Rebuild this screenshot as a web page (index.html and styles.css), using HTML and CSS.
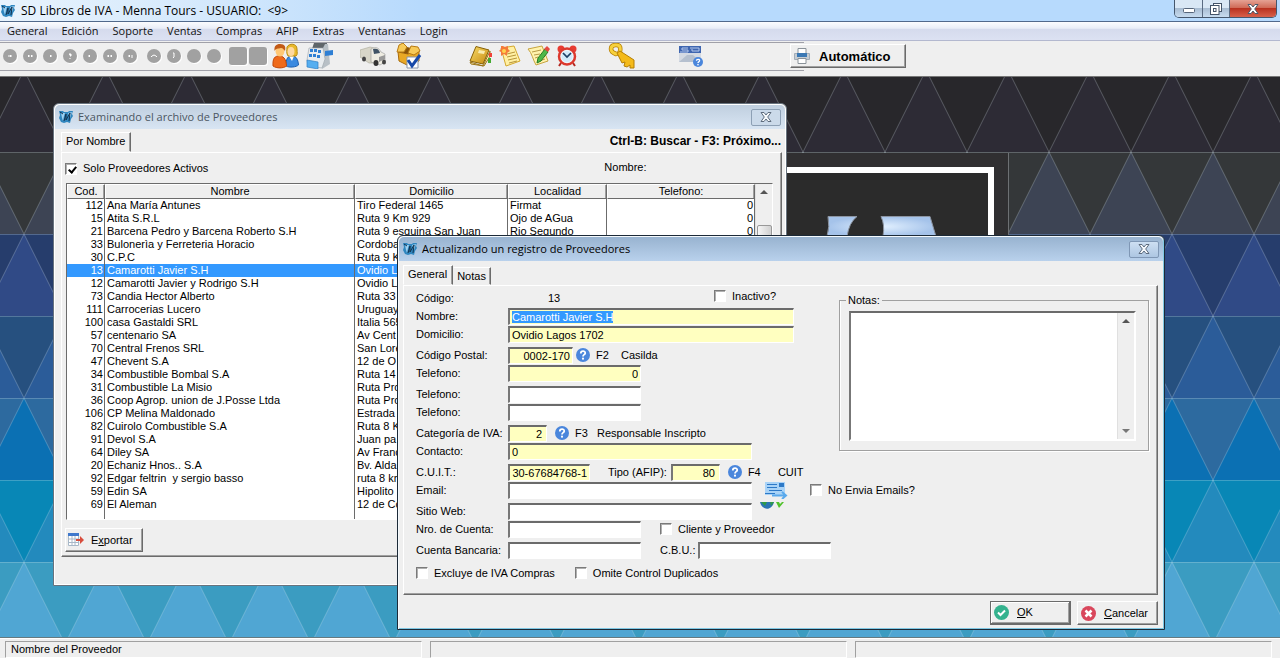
FILE: index.html
```html
<!DOCTYPE html>
<html lang="es">
<head>
<meta charset="utf-8">
<title>SD Libros de IVA - Menna Tours</title>
<link rel="stylesheet" href="styles.css">
</head>
<body>
<svg class="defs" width="0" height="0" aria-hidden="true">
  <defs>
    <linearGradient id="gold" x1="0" y1="0" x2="1" y2="1"><stop offset="0" stop-color="#f9dc6a"/><stop offset="1" stop-color="#c68a10"/></linearGradient>
    <symbol id="app" viewBox="0 0 14 14"><path fill="#2f86bf" d="M0 1h4l1 1h4l1-1h4l-1 3 1 2-2 3-1 4-3-1-3 1-3-1-2-4 1-3z"/><path fill="#9fd0f0" d="M2 3h4L5 6 4 11 3 8zM9 3l4-1-2 6z"/><path fill="none" stroke="#12324f" d="M5 11 7 4v6l4-7-1 8M1 2l3 2"/></symbol>
    <symbol id="help" viewBox="0 0 14 14"><circle cx="7" cy="7" r="7" fill="#4a86dc"/><path fill="none" stroke="#fff" stroke-width="1.8" d="M4.8 5.4c0-3 4.6-2.8 4.4-.3C9.100 6.700 7 6.600 7 8.400"/><circle cx="7" cy="10.700" r="1.100" fill="#fff"/></symbol>
    <symbol id="close" viewBox="0 0 12 10"><path d="M1 .5h3L6 3l2-2.500h3L7.700 5 11 9.500H8L6 7 4 9.500H1L4.300 5z" fill="#fff" stroke="#4c5a6c"/></symbol>
  </defs>
</svg>

<header class="titlebar">
  <svg class="app-icon"><use href="#app"/></svg>
  <h1 class="title">SD Libros de IVA - Menna Tours - USUARIO:&nbsp; &lt;9&gt;</h1>
  <div class="window-controls">
    <button class="ctl ctl-min" type="button" aria-label="Minimizar"><svg width="12" height="5"><rect x=".5" y=".5" width="11" height="4" rx="1" fill="#fff" stroke="#56657a"/></svg></button>
    <button class="ctl ctl-max" type="button" aria-label="Restaurar"><svg width="12" height="12" fill="#fff" stroke="#445368"><rect x="3.500" y=".5" width="8" height="8"/><rect x=".5" y="2.500" width="8.500" height="9"/><rect x="3.500" y="5.500" width="2.500" height="3"/></svg></button>
    <button class="ctl ctl-close" type="button" aria-label="Cerrar"><svg width="12" height="10"><use href="#close"/></svg></button>
  </div>
</header>

<nav class="menubar">
  <a href="#">General</a><a href="#">Edición</a><a href="#">Soporte</a><a href="#">Ventas</a><a href="#">Compras</a><a href="#">AFIP</a><a href="#">Extras</a><a href="#">Ventanas</a><a href="#">Login</a>
</nav>

<div class="toolbar">
  <div class="group nav-group">
    <button class="dot" type="button" aria-label="Primero"><svg viewBox="0 0 8 8"><path d="M5 3v2L4 4zM2 4h3"/></svg></button>
    <button class="dot" type="button" aria-label="Página anterior"><svg viewBox="0 0 8 8"><path d="M3 3v2L2 4zM6 3v2L5 4z"/></svg></button>
    <button class="dot" type="button" aria-label="Anterior"><svg viewBox="0 0 8 8"><path d="M5 3v2L4 4z"/></svg></button>
    <button class="dot" type="button" aria-label="Buscar"><svg viewBox="0 0 8 8"><path d="M3 2h2v2H4M4 6v1"/></svg></button>
    <button class="dot" type="button" aria-label="Siguiente"><svg viewBox="0 0 8 8"><path d="M3 3v2l1-1z"/></svg></button>
    <button class="dot" type="button" aria-label="Página siguiente"><svg viewBox="0 0 8 8"><path d="M2 3v2l1-1zM5 3v2l1-1z"/></svg></button>
    <button class="dot" type="button" aria-label="Último"><svg viewBox="0 0 8 8"><path d="M3 3v2l1-1zM6 3v3"/></svg></button>
  </div>
  <div class="group edit-group">
    <button class="dot" type="button" aria-label="Arriba"><svg viewBox="0 0 8 8"><path fill="none" d="M1 5l1-1 2-1 2 1 1 1"/></svg></button>
    <button class="dot" type="button" aria-label="Insertar"><svg viewBox="0 0 8 8"><path fill="none" d="M3 1h1v4M3 5l1 1"/></svg></button>
    <button class="dot" type="button" aria-label="Modificar"></button>
    <button class="dot" type="button" aria-label="Eliminar"></button>
  </div>
  <div class="group square-group">
    <button class="square" type="button" aria-label="Copiar"></button>
    <button class="square" type="button" aria-label="Pegar"></button>
  </div>
  <div class="group people-group">
    <button class="tool" type="button" aria-label="Clientes"><svg width="28" height="26" viewBox="0 0 28 26"><path fill="#3b8ae0" stroke="#1e5fae" d="M14 23c0-8 2-10 6-10s6 3 6.500 9c-2 2-9 3-12.500 1z"/><path fill="#fff" d="m17 13 3 5 2-5z"/><path fill="#e8b92c" stroke="#b98a12" d="M15 4c2-4 10-4 10 2 0 4 1 5-1 7h-8c-2-3-1-6-1-9z"/><ellipse cx="19" cy="8.500" rx="3.500" ry="4.500" fill="#ffd9a0"/><path fill="#ef6a1a" stroke="#c14708" d="M1 23c-.5-8 2-10 6-10s7 2 7.500 10c-3 2.500-10 2.500-13.500 0z"/><ellipse cx="8" cy="8" rx="4.500" ry="5.500" fill="#ffc875"/><path fill="#c25a16" d="M2.500 8C2 3 4 1 8 1c5 0 6 3 5 7-1-1-2-3-4-3-3 1-5 0-6.500 3z"/></svg></button>
    <button class="tool" type="button" aria-label="Caja"><svg width="28" height="26" viewBox="0 0 28 26"><path fill="#5f666a" d="M8 0h13v6H6z"/><path fill="#b8c0c6" d="M19 1h3l2 20-8 5-1-17z"/><path fill="#e8ecef" stroke="#9aa3aa" stroke-width=".6" d="M3 5h14l2 11-3 9-14-2-1-6z"/><path fill="#2e7fd4" d="M4 6h3v3H4zM8 6h3v3H8zM12 7h3v3h-3zM3 11h3v3H3zM7 11h3v3H7zM11 12h3v3h-3zM19 8l8-1v5l-8 1z"/><path fill="#55aef0" stroke="#2f7fc4" stroke-width=".7" d="m1 17 11 2v7L1 24z"/></svg></button>
  </div>
  <div class="group stock-group">
    <button class="tool" type="button" aria-label="Transporte"><svg width="26" height="22" viewBox="0 0 26 22"><path fill="#d8d6c8" stroke="#aaa898" stroke-width=".6" d="m0 5 10-3 4 1v15H9L0 12z"/><path fill="#eeece2" stroke="#999" stroke-width=".6" d="M11 4c5-3 8-1 10 3l4 2v8l-5 3-9-3z"/><path fill="#405365" d="M13 4c4-1 6 0 7 4l-6 1z"/><path fill="#999" d="m19 12 6-2v4l-6 3z"/><ellipse cx="16" cy="18" rx="2.500" ry="3" fill="#333"/><ellipse cx="24" cy="17" rx="2" ry="2.500" fill="#444"/><ellipse cx="4" cy="14" rx="2" ry="2.500" fill="#444"/></svg></button>
    <button class="tool" type="button" aria-label="Artículos"><svg width="26" height="26" viewBox="0 0 26 26"><path fill="#e9a824" stroke="#a96c0c" d="m2 9 10 2 11-4v11l-10 5-10-5z"/><path fill="#8a5407" d="m3 9 8-5 12 3-11 4z"/><path fill="#f7ca58" stroke="#b87a12" d="m1 9 2-7 4-2 4 4-3 5zM12 10l3-7 7 1 2 4-6 4z"/><path fill="#fff" stroke="#8895aa" d="M11 14h11v11H11z"/><path fill="none" stroke="#1749a8" stroke-width="3" d="m12 17 4 6 8-11"/></svg></button>
  </div>
  <div class="group notes-group">
    <button class="tool" type="button" aria-label="Agenda"><svg width="24" height="22" viewBox="0 0 24 22"><path fill="#fff3b8" stroke="#9a7418" d="m1 17 13 4 7-15v5l-6 10L2 19z"/><path fill="url(#gold)" stroke="#886207" d="M7 1.500 20 5l-6 14L1 16z"/><path fill="#f9ecb0" d="m10 5 6 1-1 3-6-1z"/><path fill="#f04438" d="M20 8h3v4h-3z"/><path fill="#45aa30" d="M19 13h3v5h-3z"/></svg></button>
    <button class="tool" type="button" aria-label="Nueva nota"><svg width="24" height="22" viewBox="0 0 24 22"><path fill="#fff0a4" stroke="#d4a82e" d="m3 3 13-2 6 15-14 5C6 15 5 9 3 3z"/><path stroke="#b79538" d="m9 9 8-2M9 12l9-2M10 15l9-2M11 18l8-2"/><path fill="#f47b3a" d="m5 1 2 1 3-1v3l2 2-3 2v3L6 9l-3 2V7L1 6l2-2V1z"/><circle cx="6" cy="6" r="2" fill="#ffd24c"/></svg></button>
    <button class="tool" type="button" aria-label="Editar nota"><svg width="24" height="22" viewBox="0 0 24 22"><path fill="#fff3ae" stroke="#c7a440" d="m1 4 14-3 6 15-12 4C6 15 5 8 1 4z"/><path stroke="#b79a46" d="m5 7 9-2M7 10l6-1M8 13l3-1M10 17l8-3"/><path fill="#4db848" stroke="#287c24" d="m11 13 7-9 3 3-7 9-4 2z"/><path fill="#e54b42" d="m17 4 3-3 3 3-2 3z"/></svg></button>
    <button class="tool" type="button" aria-label="Alarma"><svg width="22" height="22" viewBox="0 0 22 22"><circle cx="5" cy="4" r="3.500" fill="#e83c32"/><circle cx="17" cy="4" r="3.500" fill="#e83c32"/><path stroke="#b22a22" stroke-width="2" d="m5 18-2 3M17 18l2 3"/><circle cx="11" cy="11.500" r="8" fill="#eef7fc" stroke="#dc392e" stroke-width="2.500"/><circle cx="11" cy="11.500" r="5.500" fill="#d2eafa"/><path fill="none" stroke="#1c3f66" stroke-width="1.700" d="m7 8 4 4 4-4"/></svg></button>
  </div>
  <div class="group key-group">
    <button class="tool" type="button" aria-label="Clave"><svg width="28" height="26" viewBox="0 0 28 26"><path fill="none" stroke="#b57f05" stroke-width="4.500" d="M3 6c0-5 8-5 9-2 1 5-1 7-4 7-3-1-5-2-5-5z"/><path fill="none" stroke="#f7d13d" stroke-width="3" d="M3 6c0-5 8-5 9-2 1 5-1 7-4 7-3-1-5-2-5-5z"/><path fill="#f4ba1a" stroke="#b57f05" d="m9 10 3-2 14 9v8h-4v-3l-3 2-3-1 1-4-3 1z"/></svg></button>
  </div>
  <div class="group mail-group">
    <button class="tool" type="button" aria-label="Mensajes SD"><svg width="26" height="22" viewBox="0 0 26 22"><path fill="#d4dae3" d="M1 8h22v9H1z"/><path fill="#b5c0cf" d="m1 17 8-7h6l8 7z"/><path fill="#3f66b0" d="M1 1h22v7H1z"/><path fill="none" stroke="#b5c8ec" d="M10 3H4v2h6v2H2M12 3h9v3h-7V4"/><svg x="15" y="12" width="10" height="10"><use href="#help"/></svg></svg></button>
  </div>
  <button class="btn auto-btn" type="button"><svg width="16" height="16" viewBox="0 0 16 16"><path fill="#fff" stroke="#8a9299" d="M4 .5h8v5H4z"/><path fill="#c6cdd3" stroke="#a3adb8" d="M.5 5.500h15v6H.5z"/><path fill="#3b78b4" d="M3 5h10v4H3z"/><path fill="#fff" stroke="#8a9299" d="M4 10.500h8v5H4z"/></svg>Automático</button>
</div>

<main class="desktop">
  <svg class="wallpaper" aria-hidden="true">
    <defs>
      <pattern id="triangles" x="24" y="-7" width="82" height="574" patternUnits="userSpaceOnUse">
        <rect width="82" height="82" fill="#2d2b35"/><rect y="82" width="82" height="82" fill="#343739"/>
        <rect y="164" width="82" height="82" fill="#304a86"/><rect y="246" width="82" height="82" fill="#26507f"/>
        <rect y="328" width="82" height="82" fill="#0b70b3"/><rect y="410" width="82" height="82" fill="#0887b6"/>
        <rect y="492" width="82" height="82" fill="#50a6d3"/>
        <path fill="#28272b" d="M0 0h82L41 82z"/><path fill="#3d4454" d="M41 82 0 164h82z"/>
        <path fill="#263d6c" d="M0 164h82l-41 82z"/><path fill="#2b5c99" d="M41 246 0 328h82z"/>
        <path fill="#2d6a9f" d="M0 328h82l-41 82z"/><path fill="#238abd" d="M41 410 0 492h82z"/>
        <path fill="#3b9cc1" d="M0 492h82l-41 82z"/>
        <path fill="none" stroke="#dceaf5" stroke-opacity=".25" d="M0 .5h82M0 82.500h82M0 164.500h82M0 246.500h82M0 328.500h82M0 410.500h82M0 492.500h82M0 0l41 82 41-82M0 164l41-82 41 82M0 164l41 82 41-82M0 328l41-82 41 82M0 328l41 82 41-82M0 492l41-82 41 82M0 492l41 82 41-82"/>
      </pattern>
      <radialGradient id="shine"><stop offset="0" stop-color="#e3f1ff"/><stop offset="1" stop-color="#a5c3ea"/></radialGradient>
    </defs>
    <rect width="100%" height="100%" fill="url(#triangles)"/>
    <path fill="#302f31" d="M600 76h408v300H600z"/>
    <path stroke="#6d7073" d="M1008.500 76v300"/>
    <path fill="#2b2b2b" stroke="#fff" stroke-width="6" d="M640 93h351v250H640z"/>
    <path fill="url(#shine)" stroke="#8d95a2" d="M828 139.500h29q-8 6-10 20h-20q3-10 1-20zM881 139.500h49l6 20h-53q2-12-2-20z"/>
  </svg>

  <section class="window browse" aria-labelledby="browse-title">
    <div class="win-title inactive">
      <svg class="app-icon"><use href="#app"/></svg>
      <h2 class="title" id="browse-title">Examinando el archivo de Proveedores</h2>
      <button class="win-close" type="button" aria-label="Cerrar"><svg width="12" height="10"><use href="#close"/></svg></button>
    </div>
    <div class="win-body">
      <div class="tabs">
        <button class="tab active" type="button">Por Nombre</button>
        <strong class="hint">Ctrl-B: Buscar - F3: Próximo...</strong>
      </div>
      <div class="panel browse-panel">
        <div class="filter">
          <label class="check"><input type="checkbox" checked>Solo Proveedores Activos</label>
          <span class="locator">Nombre:</span>
        </div>
        <div class="list">
          <table class="rows">
            <colgroup><col class="c-cod"><col class="c-nom"><col class="c-dom"><col class="c-loc"><col></colgroup>
            <thead><tr><th>Cod.</th><th>Nombre</th><th>Domicilio</th><th>Localidad</th><th>Telefono:</th></tr></thead>
            <tbody>
              <tr><td>112</td><td>Ana María Antunes</td><td>Tiro Federal 1465</td><td>Firmat</td><td>0</td></tr>
              <tr><td>15</td><td>Atita S.R.L</td><td>Ruta 9 Km 929</td><td>Ojo de AGua</td><td>0</td></tr>
              <tr><td>21</td><td>Barcena Pedro y Barcena Roberto S.H</td><td>Ruta 9 esquina San Juan</td><td>Rio Segundo</td><td>0</td></tr>
              <tr><td>33</td><td>Bulonerìa y Ferreteria Horacio</td><td>Cordoba</td><td></td><td></td></tr>
              <tr><td>30</td><td>C.P.C</td><td>Ruta 9 K</td><td></td><td></td></tr>
              <tr class="selected"><td>13</td><td>Camarotti Javier S.H</td><td>Ovidio L</td><td></td><td></td></tr>
              <tr><td>12</td><td>Camarotti Javier y Rodrigo S.H</td><td>Ovidio L</td><td></td><td></td></tr>
              <tr><td>73</td><td>Candia Hector Alberto</td><td>Ruta 33</td><td></td><td></td></tr>
              <tr><td>111</td><td>Carrocerias Lucero</td><td>Uruguay</td><td></td><td></td></tr>
              <tr><td>100</td><td>casa Gastaldi SRL</td><td>Italia 565</td><td></td><td></td></tr>
              <tr><td>57</td><td>centenario SA</td><td>Av Cent</td><td></td><td></td></tr>
              <tr><td>70</td><td>Central Frenos SRL</td><td>San Lore</td><td></td><td></td></tr>
              <tr><td>47</td><td>Chevent S.A</td><td>12 de O</td><td></td><td></td></tr>
              <tr><td>34</td><td>Combustible Bombal S.A</td><td>Ruta 14</td><td></td><td></td></tr>
              <tr><td>31</td><td>Combustible La Misio</td><td>Ruta Pro</td><td></td><td></td></tr>
              <tr><td>36</td><td>Coop Agrop. union de J.Posse Ltda</td><td>Ruta Pro</td><td></td><td></td></tr>
              <tr><td>106</td><td>CP Melina Maldonado</td><td>Estrada</td><td></td><td></td></tr>
              <tr><td>82</td><td>Cuirolo Combustible S.A</td><td>Ruta 8 K</td><td></td><td></td></tr>
              <tr><td>91</td><td>Devol S.A</td><td>Juan pa</td><td></td><td></td></tr>
              <tr><td>64</td><td>Diley SA</td><td>Av Franc</td><td></td><td></td></tr>
              <tr><td>20</td><td>Echaniz Hnos.. S.A</td><td>Bv. Alda</td><td></td><td></td></tr>
              <tr><td>92</td><td>Edgar feltrin&nbsp; y sergio basso</td><td>ruta 8 km</td><td></td><td></td></tr>
              <tr><td>59</td><td>Edin SA</td><td>Hipolito</td><td></td><td></td></tr>
              <tr><td>69</td><td>El Aleman</td><td>12 de Co</td><td></td><td></td></tr>
              <tr class="filler"><td></td><td></td><td></td><td></td><td></td></tr>
            </tbody>
          </table>
          <div class="scrollbar" aria-hidden="true"><span class="arrow-up"></span><span class="thumb"></span></div>
        </div>
        <button class="btn export-btn" type="button"><svg width="16" height="14" viewBox="0 0 16 14"><path fill="#fff" stroke="#a8b8c8" d="M.5.5h10v12H.5zM.5 6h10M.5 9.500h10M4 3v9M7 3v9"/><path fill="#3f78cc" d="M0 0h11v3H0z"/><path fill="#d84c3c" d="M8 6h4V3l4 4-4 4V8H8z"/></svg><span>E<u>x</u>portar</span></button>
      </div>
    </div>
  </section>

  <section class="window update" aria-labelledby="update-title">
    <div class="win-title">
      <svg class="app-icon"><use href="#app"/></svg>
      <h2 class="title" id="update-title">Actualizando un registro de Proveedores</h2>
      <button class="win-close" type="button" aria-label="Cerrar"><svg width="12" height="10"><use href="#close"/></svg></button>
    </div>
    <form class="win-body">
      <div class="tabs">
        <button class="tab active" type="button">General</button>
        <button class="tab" type="button">Notas</button>
      </div>
      <div class="panel update-panel">
        <div class="upper">
          <div class="fields">
            <div class="row"><span class="name">Código:</span><output class="code">13</output><label class="check inactive-check"><input type="checkbox">Inactivo?</label></div>
            <div class="row"><label class="name" for="nombre">Nombre:</label><input class="req w-xl" id="nombre" value="Camarotti Javier S.H"></div>
            <div class="row"><label class="name" for="domicilio">Domicilio:</label><input class="req w-xl" id="domicilio" value="Ovidio Lagos 1702"></div>
            <div class="row first"><label class="name" for="cp">Código Postal:</label><input class="req num w-s" id="cp" value="0002-170"><button class="lookup" type="button" aria-label="Buscar código postal"><svg><use href="#help"/></svg></button><span class="fkey">F2</span><span>Casilda</span></div>
            <div class="row"><label class="name" for="tel1">Telefono:</label><input class="req num w-m" id="tel1" value="0"></div>
            <div class="row first"><label class="name" for="tel2">Telefono:</label><input class="w-m" id="tel2"></div>
            <div class="row"><label class="name" for="tel3">Telefono:</label><input class="w-m" id="tel3"></div>
            <div class="row first"><label class="name" for="iva">Categoría de IVA:</label><input class="req num w-xs" id="iva" value="2"><button class="lookup" type="button" aria-label="Buscar categoría"><svg><use href="#help"/></svg></button><span class="fkey fkey-near">F3</span><span>Responsable Inscripto</span></div>
            <div class="row"><label class="name" for="contacto">Contacto:</label><input class="req w-l" id="contacto" value="0"></div>
          </div>
          <fieldset class="notes">
            <legend>Notas:</legend>
            <div class="notes-box"><textarea aria-label="Notas"></textarea><div class="scrollbar disabled" aria-hidden="true"><span class="arrow-up"></span><span class="arrow-down"></span></div></div>
          </fieldset>
        </div>
        <div class="row first"><label class="name" for="cuit">C.U.I.T.:</label><input class="req num w-cuit" id="cuit" value="30-67684768-1"><label class="type-label" for="tipo">Tipo (AFIP):</label><input class="req num w-type" id="tipo" value="80"><button class="lookup" type="button" aria-label="Buscar tipo"><svg><use href="#help"/></svg></button><span class="fkey">F4</span><span>CUIT</span></div>
        <div class="row"><label class="name" for="email">Email:</label><input class="w-l" id="email"><button class="link-btn" type="button" aria-label="Enviar email"><svg width="24" height="18" viewBox="0 0 24 18"><path fill="#a9d3f7" d="M1 1h20v13H1z"/><path fill="#2d79c7" d="M15 2h5v4h-5z"/><path stroke="#2d79c7" d="M3 3.500h10M3 6.500h10M5 9.500h13M1 12.500h10"/><path fill="none" stroke="#5aa9ec" stroke-width="2" d="M8 14.500h13M18 11l4 3.500-4 3.500"/></svg></button><label class="check"><input type="checkbox">No Envia Emails?</label></div>
        <div class="row first"><label class="name" for="web">Sitio Web:</label><input class="w-l" id="web"><button class="link-btn web-btn" type="button" aria-label="Abrir sitio web"><svg width="24" height="8" viewBox="0 0 24 8"><path fill="#2a74b4" d="M0 0h14c-2 9-12 9-14 0z"/><path fill="#2f9a48" d="M1 0h6L5 4zM10 0h4l-3 4z"/><path fill="#52c22c" d="M16 0h3l1 2 2-2h2l-5 6z"/></svg></button></div>
        <div class="row"><label class="name" for="cuenta">Nro. de Cuenta:</label><input class="w-m" id="cuenta"><label class="check client-check"><input type="checkbox">Cliente y Proveedor</label></div>
        <div class="row first"><label class="name" for="banco">Cuenta Bancaria:</label><input class="w-m" id="banco"><label class="cbu-label" for="cbu">C.B.U.:</label><input class="w-m" id="cbu"></div>
        <div class="row checks"><label class="check"><input type="checkbox">Excluye de IVA Compras</label><label class="check"><input type="checkbox">Omite Control Duplicados</label></div>
      </div>
      <div class="actions">
        <button class="btn default" type="button"><svg width="15" height="15" viewBox="0 0 15 15"><circle cx="7.500" cy="7.500" r="7.500" fill="#34b28e"/><path fill="none" stroke="#fff" stroke-width="2" d="m4 7.500 2.500 2.500L11 5.500"/></svg><span><u>O</u>K</span></button>
        <button class="btn" type="button"><svg width="15" height="15" viewBox="0 0 15 15"><circle cx="7.500" cy="7.500" r="7.500" fill="#d9475c"/><path stroke="#fff" stroke-width="2.500" d="m4.500 4.500 6 6M10.500 4.500l-6 6"/></svg><span><u>C</u>ancelar</span></button>
      </div>
    </form>
  </section>
</main>

<footer class="statusbar"><div class="pane">Nombre del Proveedor</div><div class="pane"></div><div class="pane"></div></footer>
<script src="app.js"></script>
</body>
</html>
```
FILE: styles.css
```css
* { box-sizing: border-box; }
body { margin: 0; height: 100vh; display: flex; flex-direction: column; overflow: hidden; background: #efefef; color: #000; font: 11px/13px "Liberation Sans", Arial, sans-serif; }
button, input, textarea { font: inherit; color: inherit; margin: 0; padding: 0; border-radius: 0; }
button { border: 0; background: none; }
svg { display: block; flex: none; }
h1, h2 { margin: 0; }
.defs { position: absolute; }
.title { flex: 1; font: 12px/16px "Open Sans", "Noto Sans", sans-serif; white-space: pre; }
.win-title .title { font-size: 11px; }
.app-icon { width: 14px; height: 14px; }

.titlebar { display: flex; align-items: center; gap: 6px; height: 22px; padding-left: 1px; border-bottom: 1px solid #51698b; background: linear-gradient(90deg, #e8f3fd 0, #d3e8fc 220px, #b7dafd 420px); }
.window-controls { display: flex; align-self: flex-start; height: 18px; margin-right: 3px; border: 1px solid #45566c; border-top: 0; border-radius: 0 0 5px 5px; overflow: hidden; }
.ctl { display: flex; justify-content: center; align-items: center; width: 27px; background: linear-gradient(#d9e7f5 45%, #a9bdd3 50%, #c7dbef); border-right: 1px solid #5a6b82; }
.ctl-min { width: 28px; padding-top: 4px; }
.ctl-close { width: 46px; border: 0; background: linear-gradient(#e5a294, #d06b58 45%, #b93220 50%, #d8604a); }

.menubar { display: flex; align-items: center; gap: 14px; height: 19px; padding-left: 7px; border-bottom: 1px solid #b3b8cf; background: linear-gradient(#fbfcfe 0, #e9edf7 35%, #d5dbed 40%, #dce1f2); font: 11px/16px "Open Sans", "Noto Sans", sans-serif; }
.menubar a { color: #111; text-decoration: none; }

.toolbar { display: flex; align-items: center; height: 36px; padding-bottom: 5px; border-bottom: 1px solid #777; background: linear-gradient(#a0a0a8, #a0a0a8) 0 1px / 804px 1px no-repeat, linear-gradient(#a0a0a8, #a0a0a8) 0 29px / 804px 1px no-repeat, #efefef; }
.group { display: flex; align-items: center; }
.dot { display: flex; align-items: center; justify-content: center; width: 14px; height: 14px; margin: 0 3px; border-radius: 7px; background: #a1a1a1; box-shadow: 1px 1px 0 #fff; }
.dot svg { width: 8px; height: 8px; fill: #fff; stroke: #fff; }
.edit-group, .square-group, .people-group { margin-left: 4px; }
.square { width: 18px; height: 18px; margin: 0 1px; border-radius: 3px; background: #a1a1a1; box-shadow: 1px 1px 0 #fff; }
.people-group { gap: 6px; }
.stock-group { gap: 10px; margin-left: 26px; }
.notes-group { gap: 5px; margin-left: 47px; }
.key-group { margin-left: 30px; }
.mail-group { margin-left: 42px; }

.btn { display: flex; align-items: center; border: 1px solid; border-color: #fff #6b6b6b #6b6b6b #fff; box-shadow: inset -1px -1px 0 #a0a0a0; background: #efefef; }
.auto-btn { gap: 9px; width: 116px; height: 24px; margin-left: 86px; padding-left: 3px; font-size: 13px; font-weight: bold; }

.desktop { position: relative; flex: 1; overflow: hidden; }
.wallpaper { position: absolute; inset: 0; width: 100%; height: 100%; }
.window { position: absolute; display: flex; flex-direction: column; border: 1px solid #1c2a38; border-radius: 6px 6px 0 0; background: #efefef; box-shadow: inset 1px 1px 0 #f5fafd, inset -1px -1px 0 #7fc8e4; }
.browse { left: 53px; top: 26px; width: 734px; height: 483px; border-color: #68737e; box-shadow: inset 1px 1px 0 #fff, inset -1px -1px 0 #fff; }
.update { left: 397px; top: 158px; width: 768px; height: 395px; }
.win-title { display: flex; align-items: center; gap: 5px; height: 24px; padding: 0 4px; margin: 1px 1px 0; border-radius: 5px 5px 0 0; background: linear-gradient(#98b3d0, #b9d1ec); }
.win-title.inactive { color: #4b5662; background: linear-gradient(#c0cfdf, #d8e5f3); }
.win-close { display: flex; align-items: center; justify-content: center; width: 30px; height: 17px; border: 1px solid #7f97b5; border-radius: 2px; background: linear-gradient(#cddff2, #adc6e2); }
.inactive .win-close { background: #cbdaea; border-color: #8da0b5; }
.win-close svg { opacity: .85; }
.win-body { display: flex; flex: 1; flex-direction: column; padding: 2px 4px 28px 7px; }
.update .win-body { padding: 3px 6px 4px 5px; }

.tabs { display: flex; align-items: flex-end; height: 21px; }
.tab { height: 18px; padding: 1px 4px 0 3px; border: 1px solid; border-color: #fff #6b6b6b transparent transparent; box-shadow: inset -1px 0 0 #a0a0a0; white-space: nowrap; }
.tab.active { height: 20px; padding: 0 5px 2px 4px; border-left-color: #fff; }
.hint { margin-left: auto; padding: 0 1px 4px; font-size: 12px; }
.panel { display: flex; flex: 1; flex-direction: column; border: 1px solid; border-color: #fff #6b6b6b #6b6b6b #fff; box-shadow: inset -1px -1px 0 #a0a0a0; }
.browse-panel { padding: 8px 8px 4px 3px; }
.check { display: inline-flex; align-items: center; gap: 6px; white-space: nowrap; }
.check input { position: relative; appearance: none; flex: none; width: 12px; height: 12px; border: 1px solid; border-color: #7a7a7a #fff #fff #7a7a7a; background: #fff; box-shadow: inset 1px 1px 0 #b0b0b0; }
.check input:checked::after { content: ""; position: absolute; left: 4px; top: 1px; width: 3px; height: 6px; border: solid #000; border-width: 0 2px 2px 0; transform: rotate(40deg); }
.filter { display: flex; height: 22px; }
.filter .check { height: 15px; }
.locator { margin-left: 396px; }

.list { display: flex; flex: 1; margin-left: 1px; border: 1px solid; border-color: #6b6b6b #fff #fff #6b6b6b; background: #fff; }
.rows { flex: 1; width: 0; align-self: stretch; table-layout: fixed; border-collapse: separate; border-spacing: 0; }
.c-cod { width: 38px; }
.c-nom { width: 250px; }
.c-dom { width: 153px; }
.c-loc { width: 99px; }
.rows th { height: 15px; padding: 0; border: 1px solid; border-color: #fff #6b6b6b #6b6b6b #fff; box-shadow: inset -1px 0 0 #a0a0a0; background: #efefef; font-weight: normal; }
.rows td { height: 13px; padding: 0 2px; border-right: 1px solid #6b6b6b; overflow: hidden; white-space: nowrap; }
.rows td:first-child, .rows td:last-child { padding-right: 1px; text-align: right; }
.rows .selected { background: #3399ff; color: #fff; }
.rows .filler td { height: auto; }
.scrollbar { display: flex; flex-direction: column; align-items: center; width: 17px; padding: 6px 0; border-left: 1px solid #e0e0e0; background: #efefef; }
.scrollbar.disabled { justify-content: space-between; }
.arrow-up, .arrow-down { border: 4px solid transparent; border-width: 0 4px 4px; border-bottom-color: #555; }
.arrow-down { border-width: 4px 4px 0; border-top-color: #777; }
.thumb { width: 15px; height: 40px; margin-top: 31px; border: 1px solid #999; border-radius: 2px; background: linear-gradient(90deg, #f6f6f6, #d0d0d0); }
.export-btn { gap: 7px; width: 78px; height: 24px; margin-top: 8px; padding-left: 2px; }

.update-panel { padding: 3px 8px 0 12px; }
.upper { display: flex; justify-content: space-between; }
.row { display: flex; align-items: center; height: 18px; white-space: nowrap; }
.row.first { margin-top: 3px; }
.name { width: 92px; }
.row > input { height: 17px; padding: 0 2px; border: solid; border-color: #6b6b6b #fff #fff #777; border-width: 2px 1px 1px 2px; outline: 0; background: #fff; }
.row > .req { background: #ffffc0; }
.row > .num { text-align: right; }
.row > .w-xl { width: 286px; }
.row > .w-l { width: 244px; }
.row > .w-m { width: 133px; }
.row > .w-s { width: 65px; }
.row > .w-xs { width: 39px; padding-right: 4px; }
.row > .w-cuit { width: 82px; }
.row > .w-type { width: 49px; padding-right: 4px; }
input::selection { background: #3399ff; color: #fff; }
.code { width: 206px; padding-left: 40px; }
.inactive-check { height: 14px; align-self: flex-start; }
.lookup { margin: 0 6px 0 8px; }
.lookup svg { width: 14px; height: 14px; }
.w-s + .lookup { margin-left: 3px; }
.fkey { width: 25px; }
.fkey-near { width: 22px; }
.w-type + .lookup + .fkey { width: 30px; }
.type-label { margin: 0 4px 0 18px; }
.link-btn { width: 24px; margin: 0 22px 0 12px; }
.web-btn { align-self: flex-start; margin-left: 8px; }
.client-check { margin-left: 19px; }
.cbu-label { width: 38px; margin-left: 19px; }
.checks { gap: 20px; margin-top: 5px; }
.notes { display: flex; width: 310px; height: 157px; margin: 5px 0 0; padding: 0 12px 9px 9px; border: 1px solid #a0a0a0; box-shadow: inset 1px 0 0 #fff, 1px 1px 0 #fff; min-width: 0; }
.notes legend { padding: 0 2px; margin-left: -3px; }
.notes-box { display: flex; width: 100%; height: 130px; margin-top: 4px; border: 2px solid; border-color: #6b6b6b #fff #fff #777; background: #fff; }
.notes textarea { flex: 1; border: 0; outline: 0; resize: none; background: #fff; }
.actions { display: flex; justify-content: flex-end; gap: 6px; margin-top: 6px; }
.actions .btn { gap: 8px; width: 81px; height: 24px; padding-left: 3px; }
.actions .default { border: solid #6b6b6b; border-width: 1px 2px 2px 1px; box-shadow: inset 1px 1px 0 #fff, inset -1px -1px 0 #a0a0a0; }

.statusbar { display: grid; grid-template-columns: repeat(3, 1fr); gap: 8px; height: 21px; padding: 3px 8px 2px 5px; border-top: 1px solid #667a80; box-shadow: inset 0 1px 0 #fff; background: #efefef; }
.pane { padding: 1px 5px; border: 1px solid; border-color: #a0a0a0 #fff #fff #a0a0a0; }
```
FILE: app.js
```js
const nameField = document.getElementById("nombre");
nameField.focus();
nameField.select();
```
